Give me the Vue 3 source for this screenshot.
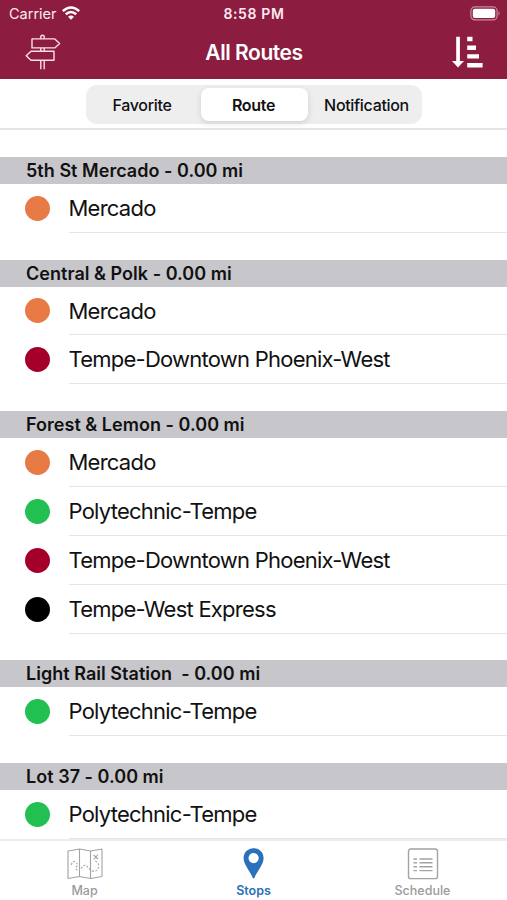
<script setup>
import { ref } from 'vue'

const segments = ['Favorite', 'Route', 'Notification']
const activeSegment = ref('Route')

const colors = {
  Mercado: '#e87a45',
  'Tempe-Downtown Phoenix-West': '#a50029',
  'Polytechnic-Tempe': '#21c050',
  'Tempe-West Express': '#000000',
}

const stops = [
  { name: '5th St Mercado - 0.00 mi', routes: ['Mercado'] },
  { name: 'Central & Polk - 0.00 mi', routes: ['Mercado', 'Tempe-Downtown Phoenix-West'] },
  {
    name: 'Forest & Lemon - 0.00 mi',
    routes: ['Mercado', 'Polytechnic-Tempe', 'Tempe-Downtown Phoenix-West', 'Tempe-West Express'],
  },
  { name: 'Light Rail Station  - 0.00 mi', routes: ['Polytechnic-Tempe'] },
  { name: 'Lot 37 - 0.00 mi', routes: ['Polytechnic-Tempe'] },
]
</script>

<template>
  <div class="screen">
    <header class="top">
      <div class="status">
        <div class="carrier">
          <span>Carrier</span>
          <svg class="wifi" width="18" height="14" viewBox="0 0 18 14" fill="none" stroke="#fff" stroke-width="2.5">
            <path d="M.8 5.1Q9-2.2 17.2 5.1" />
            <path d="M3.8 8.3Q9 3.8 14.2 8.3" />
            <path d="M6 10.8Q9 8 12 10.8L9 13.8Z" fill="#fff" stroke="none" />
          </svg>
        </div>
        <span class="time">8:58 PM</span>
        <svg class="battery" width="31" height="15" viewBox="0 0 31 15">
          <rect x="0.9" y="0.9" width="26.2" height="13" rx="4" fill="none" stroke="#c78a9e" stroke-width="1.2" />
          <rect x="2.8" y="2.8" width="22.4" height="9.2" rx="2" fill="#fff" />
          <path d="M28.5 5.2Q30.8 7.4 28.5 9.6Z" fill="#c78a9e" />
        </svg>
      </div>
      <div class="nav">
        <svg width="36" height="36" viewBox="0 0 36 36" fill="none" stroke="#fbdfe7" stroke-width="1.4" stroke-linejoin="round">
          <path d="M15.8 4.8V2.2Q17.5.2 19.2 2.2V4.8M15.8 14V17.2M19.2 14V17.2M15.8 26.3V35.2M19.2 26.3V35.2" />
          <path d="M7 4.9H29.8L34.6 9.4L29.8 13.9H7Z" />
          <path d="M29 17.3H6L1.2 21.8L6 26.3H29Z" />
        </svg>
        <h1>All Routes</h1>
        <svg width="31" height="32" viewBox="0 0 31 32" fill="#fff">
          <path d="M4.2 .8H7.9V25H12L6 31.6L0 25H4.2Z" />
          <path d="M15.2 .8H20.5V5.2H15.2ZM15.2 9.5H24V13.9H15.2ZM15.2 18.2H27V22.6H15.2ZM15.2 27H30.6V31.4H15.2Z" />
        </svg>
      </div>
    </header>

    <div class="filter">
      <div class="segmented">
        <button
          v-for="s in segments"
          :key="s"
          :class="{ active: s === activeSegment }"
          @click="activeSegment = s"
        >{{ s }}</button>
      </div>
    </div>

    <main class="list">
      <section v-for="stop in stops" :key="stop.name">
        <h2>{{ stop.name }}</h2>
        <div v-for="r in stop.routes" :key="r" class="route">
          <span class="dot" :style="{ background: colors[r] }"></span>
          <span class="name">{{ r }}</span>
        </div>
      </section>
    </main>

    <nav class="tabs">
      <div class="tab">
        <svg width="36" height="32" viewBox="0 0 36 32" fill="none" stroke="#a3a3a3" stroke-width="1.1" stroke-linejoin="round">
          <path d="M1 3L12.5 1L23.5 3L35 1V28.5L23.5 30.5L12.5 28.5L1 30.5ZM12.5 1V28.5M23.5 3V30.5" />
          <path d="M4.5 17Q5 12.5 8.5 14Q12 16.5 9.5 18.5Q7.5 21 11 22.5M14 20.5Q18 14.5 21.5 20L25 23Q32 24 31.5 17Q31.5 14 27.5 13" stroke-dasharray="2 1.5" />
          <path d="M26.5 7L31 11M31 6.5L26.8 11.5" />
        </svg>
        <span>Map</span>
      </div>
      <div class="tab active">
        <svg width="36" height="32" viewBox="0 0 36 32">
          <path fill="#2a70bb" fill-rule="evenodd" d="M17.6 .3C11.8 .3 7.6 4.5 7.6 10.2C7.6 16.3 14 23 16.6 29.5Q17.6 31.5 18.6 29.5C21.2 23 27.6 16.3 27.6 10.2C27.6 4.5 23.4 .3 17.6 .3ZM17.6 5A5.1 5.1 0 1 1 17.6 15.2A5.1 5.1 0 1 1 17.6 5Z" />
        </svg>
        <span>Stops</span>
      </div>
      <div class="tab">
        <svg width="36" height="32" viewBox="0 0 36 32" fill="none" stroke="#a3a3a3" stroke-width="1.4">
          <rect x="3.5" y="1" width="29" height="29.6" rx="2.2" />
          <path d="M8.5 11H12M8.5 14.8H12M8.5 18.7H12M8.5 22.6H12M14.5 11H27.5M14.5 14.8H27.5M14.5 18.7H27.5M14.5 22.6H27.5" />
        </svg>
        <span>Schedule</span>
      </div>
    </nav>
  </div>
</template>

<style>
body {
  margin: 0;
  background: #fff;
}
</style>

<style scoped>
.screen {
  width: 507px;
  height: 900px;
  display: flex;
  flex-direction: column;
  overflow: hidden;
  background: #fff;
  color: #111;
  font-family: Inter, "Liberation Sans", sans-serif;
}
.top {
  flex: none;
  height: 79px;
  background: #8c1d40;
  color: #fff;
}
.status {
  display: grid;
  grid-template-columns: 1fr auto 1fr;
  align-items: center;
  height: 27px;
  padding: 0 6px 0 9px;
  font-size: 14.5px;
  color: #fdeaf0;
}
.carrier {
  display: flex;
  align-items: center;
  gap: 5px;
  letter-spacing: 0;
}
.wifi {
  margin-top: -2px;
}
.time {
  margin-right: 2px;
  font-weight: 600;
  font-size: 14px;
  letter-spacing: 0.65px;
}
.battery {
  justify-self: end;
}
.nav {
  display: grid;
  grid-template-columns: 1fr auto 1fr;
  align-items: center;
  height: 50px;
  padding: 0 24px 0 25px;
}
.nav svg:last-child {
  justify-self: end;
}
h1 {
  margin: 0;
  font-size: 21px;
  font-weight: 600;
  letter-spacing: -0.45px;
}
.filter {
  flex: none;
  display: flex;
  justify-content: center;
  box-sizing: border-box;
  height: 51px;
  padding-top: 6px;
  border-bottom: 2px solid #e4e4e5;
}
.segmented {
  display: grid;
  grid-template-columns: 112px 111px 1fr;
  box-sizing: border-box;
  width: 336px;
  height: 39px;
  padding: 3px 1px;
  border-radius: 11px;
  background: #eeeeef;
}
.segmented button {
  margin: 0 2px;
  padding: 0 1px 0 0;
  border: 0;
  border-radius: 8px;
  background: none;
  color: #111;
  font: 500 16px Inter, sans-serif;
  letter-spacing: -0.32px;
}
.segmented button:last-child {
  padding: 0 0 0 3px;
}
.segmented button.active {
  background: #fff;
  font-weight: 600;
  box-shadow: 0 2px 6px rgba(0, 0, 0, 0.13);
}
.list {
  flex: 1;
  min-height: 0;
  padding-top: 0.25px;
  overflow: hidden;
}
section {
  padding-top: 26.7px;
}
h2 {
  margin: 0;
  height: 27px;
  padding-left: 26px;
  background: #c7c6cb;
  font-size: 18px;
  font-weight: 600;
  line-height: 27px;
  letter-spacing: 0.03px;
  white-space: pre;
}
.route {
  display: flex;
  align-items: center;
  gap: 18.5px;
  height: 48.9px;
  padding-left: 25px;
}
.dot {
  width: 25px;
  height: 25px;
  border-radius: 50%;
}
.name {
  flex: 1;
  box-sizing: border-box;
  height: 100%;
  border-bottom: 1px solid #e6e6e8;
  font-size: 22px;
  line-height: 49px;
  letter-spacing: -0.76px;
}
.tabs {
  flex: none;
  display: grid;
  grid-template-columns: repeat(3, 1fr);
  box-sizing: border-box;
  height: 61px;
  padding-top: 7px;
  border-top: 2px solid #ececed;
  background: #fff;
}
.tab {
  display: flex;
  flex-direction: column;
  align-items: center;
  gap: 3px;
  color: #9b9b9b;
  font-size: 12.5px;
  font-weight: 500;
  line-height: 16px;
}
.tab.active {
  color: #2a70bb;
  font-weight: 600;
}
</style>
